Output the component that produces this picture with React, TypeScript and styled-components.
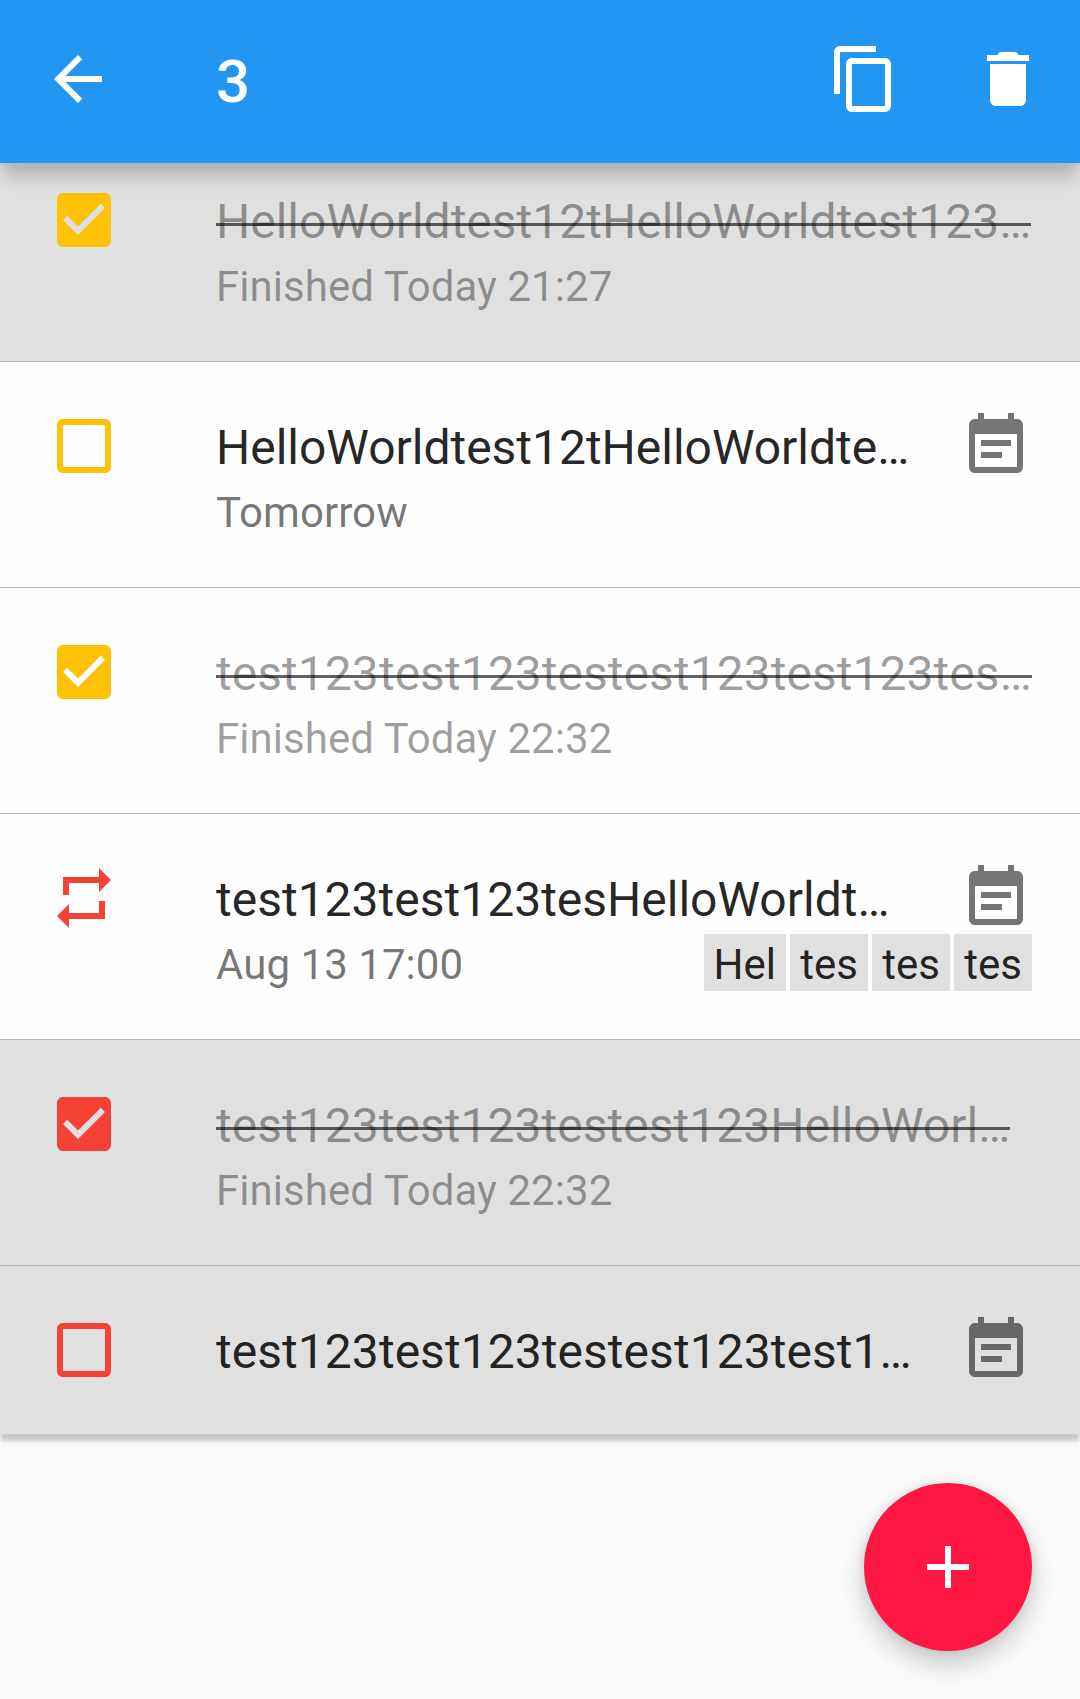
import React from "react";
import styled, { createGlobalStyle, css } from "styled-components";

const GlobalStyle = createGlobalStyle`
  *, *::before, *::after { box-sizing: border-box; }
  body {
    margin: 0;
    background: #fafafa;
    font-family: Roboto, "Liberation Sans", sans-serif;
    overflow: hidden;
  }
`;

const Screen = styled.div`
  position: relative;
  display: flex;
  flex-direction: column;
  width: 1080px;
  height: 1699px;
  background: #fafafa;
  overflow: hidden;
`;

const Toolbar = styled.header`
  position: relative;
  z-index: 1;
  display: flex;
  align-items: center;
  flex: none;
  height: 163px;
  padding: 0 36px 5px 42px;
  background: #2196f3;
  color: #fff;
  box-shadow: 0 12px 20px -2px rgba(0, 0, 0, 0.26);
`;

const IconButton = styled.button`
  display: flex;
  flex: none;
  padding: 0;
  border: 0;
  background: none;
  color: inherit;
`;

const Count = styled.h1`
  flex: 1;
  margin: 0 0 0 102px;
  font-size: 60px;
  font-weight: 500;
  line-height: 70px;
  padding-top: 5px;
`;

const Actions = styled.div`
  display: flex;
  gap: 72px;
`;

const Icon = styled.svg`
  display: block;
  flex: none;
  width: 72px;
  height: 72px;
  fill: currentColor;
`;

const List = styled.ul`
  flex: none;
  margin: -27px 0 0;
  padding: 0;
  list-style: none;
  box-shadow: 0 8px 4px -1px rgba(0, 0, 0, 0.2);
`;

const Row = styled.li<{ $selected?: boolean; $single?: boolean }>`
  display: flex;
  align-items: flex-start;
  height: ${(p) => (p.$single ? 168 : 226)}px;
  padding: 48px 48px 0;
  background: ${(p) => (p.$selected ? "#e0e0e0" : "#fefefe")};
  border-bottom: ${(p) => (p.$single ? "0" : "1px solid #b4b4b4")};
`;

const Marker = styled.span<{ $color: string }>`
  flex: none;
  width: 168px;
  color: ${(p) => p.$color};
`;

const Body = styled.div`
  flex: 1;
  min-width: 0;
`;

const Line = styled.div`
  display: flex;
  align-items: flex-start;
  justify-content: space-between;
`;

const Title = styled.span<{ $done?: boolean; $tracking?: number }>`
  position: relative;
  font-size: 48px;
  line-height: 56px;
  letter-spacing: ${(p) => p.$tracking ?? 0}px;
  padding-top: 10px;
  height: 72px;
  white-space: nowrap;
  color: ${(p) => (p.$done ? "rgba(0, 0, 0, 0.38)" : "rgba(0, 0, 0, 0.87)")};
  ${(p) =>
    p.$done &&
    css`
      &::after {
        content: "";
        position: absolute;
        left: 0;
        right: 0;
        top: 39px;
        height: 3px;
        background: rgba(0, 0, 0, 0.62);
      }
    `}
`;

const Subtitle = styled.span<{ $done?: boolean }>`
  font-size: 42px;
  line-height: 50px;
  letter-spacing: 0.05px;
  padding-top: 6px;
  white-space: nowrap;
  color: ${(p) => (p.$done ? "rgba(0, 0, 0, 0.38)" : "rgba(0, 0, 0, 0.54)")};
`;

const Note = styled.span`
  color: rgba(0, 0, 0, 0.54);
`;

const Tags = styled.div`
  display: flex;
  gap: 4px;
`;

const Tag = styled.span`
  display: flex;
  justify-content: center;
  min-width: 78px;
  height: 57px;
  padding: 6px 10px 0;
  background: #e0e0e0;
  color: rgba(0, 0, 0, 0.87);
  font-size: 42px;
  line-height: 50px;
`;

const Fab = styled.button`
  position: absolute;
  right: 48px;
  bottom: 48px;
  display: flex;
  align-items: center;
  justify-content: center;
  width: 168px;
  height: 168px;
  padding: 0;
  border: 0;
  border-radius: 50%;
  background: #ff1744;
  color: #fff;
  box-shadow: 0 13px 26px rgba(0, 0, 0, 0.2), 0 0 10px rgba(0, 0, 0, 0.08);
`;

const PATHS = {
  back: "M20 11H7.83l5.59-5.59L12 4l-8 8 8 8 1.41-1.41L7.83 13H20v-2z",
  copy: "M16 1H4c-1.1 0-2 .9-2 2v14h2V3h12V1zm3 4H8c-1.1 0-2 .9-2 2v14c0 1.1.9 2 2 2h11c1.1 0 2-.9 2-2V7c0-1.1-.9-2-2-2zm0 16H8V7h11v14z",
  trash: "M6 19c0 1.1.9 2 2 2h8c1.1 0 2-.9 2-2V7H6v12zM19 4h-3.5l-.2-.3c-.25-.45-.5-.7-1.1-.7H9.8c-.6 0-.85.25-1.1.7L8.500 4H5v2h14V4z",
  checked:
    "M19 3H5c-1.11 0-2 .9-2 2v14c0 1.1.89 2 2 2h14c1.11 0 2-.9 2-2V5c0-1.1-.89-2-2-2zm-9 14l-5-5 1.41-1.41L10 14.17l7.59-7.59L19 8l-9 9z",
  unchecked:
    "M19 5v14H5V5h14m0-2H5c-1.1 0-2 .9-2 2v14c0 1.1.9 2 2 2h14c1.1 0 2-.9 2-2V5c0-1.1-.9-2-2-2z",
  repeat: "M7 7h10v3l4-4-4-4v3H5v6h2V7zm10 10H7v-3l-4 4 4 4v-3h12v-6h-2v4z",
  note: "M17 10H7v2h10v-2zm2-7h-1V1h-2v2H8V1H6v2H5c-1.11 0-1.99.9-1.99 2L3 19c0 1.1.89 2 2 2h14c1.1 0 2-.9 2-2V5c0-1.1-.9-2-2-2zm0 16H5V8h14v11zm-5-5H7v2h7v-2z",
  add: "M19 13h-6v6h-2v-6H5v-2h6V5h2v6h6v2z",
};

type Name = keyof typeof PATHS;

const Glyph = ({ name }: { name: Name }) => (
  <Icon viewBox="0 0 24 24" aria-hidden="true">
    <path d={PATHS[name]} />
  </Icon>
);

const AMBER = "#ffc107";
const RED = "#f44336";

interface Task {
  marker: Name;
  color: string;
  title: string;
  tracking?: number;
  subtitle?: string;
  done?: boolean;
  selected?: boolean;
  note?: boolean;
  tags?: string[];
}

const TASKS: Task[] = [
  { marker: "checked", color: AMBER, title: "HelloWorldtest12tHelloWorldtest123…", subtitle: "Finished Today 21:27", done: true, selected: true },
  { marker: "unchecked", color: AMBER, title: "HelloWorldtest12tHelloWorldte…", tracking: -0.02, subtitle: "Tomorrow", note: true },
  { marker: "checked", color: AMBER, title: "test123test123testest123test123tes…", tracking: 0.045, subtitle: "Finished Today 22:32", done: true },
  { marker: "repeat", color: RED, title: "test123test123tesHelloWorldt…", subtitle: "Aug 13 17:00", note: true, tags: ["Hel", "tes", "tes", "tes"] },
  { marker: "checked", color: RED, title: "test123test123testest123HelloWorl…", tracking: 0.03, subtitle: "Finished Today 22:32", done: true, selected: true },
  { marker: "unchecked", color: RED, title: "test123test123testest123test1…", tracking: 0.045, note: true, selected: true },
];

const TaskRow = ({ task }: { task: Task }) => (
  <Row $selected={task.selected} $single={!task.subtitle}>
    <Marker $color={task.color}>
      <Glyph name={task.marker} />
    </Marker>
    <Body>
      <Line>
        <Title $done={task.done} $tracking={task.tracking}>
          {task.title}
        </Title>
        {task.note && (
          <Note>
            <Glyph name="note" />
          </Note>
        )}
      </Line>
      {task.subtitle && (
        <Line>
          <Subtitle $done={task.done}>{task.subtitle}</Subtitle>
          {task.tags && (
            <Tags>
              {task.tags.map((tag, i) => (
                <Tag key={i}>{tag}</Tag>
              ))}
            </Tags>
          )}
        </Line>
      )}
    </Body>
  </Row>
);

export default function App() {
  return (
    <>
      <GlobalStyle />
      <Screen>
        <Toolbar>
          <IconButton aria-label="Back">
            <Glyph name="back" />
          </IconButton>
          <Count>3</Count>
          <Actions>
            <IconButton aria-label="Copy">
              <Glyph name="copy" />
            </IconButton>
            <IconButton aria-label="Delete">
              <Glyph name="trash" />
            </IconButton>
          </Actions>
        </Toolbar>
        <List>
          {TASKS.map((task, i) => (
            <TaskRow key={i} task={task} />
          ))}
        </List>
        <Fab aria-label="Add">
          <Glyph name="add" />
        </Fab>
      </Screen>
    </>
  );
}
